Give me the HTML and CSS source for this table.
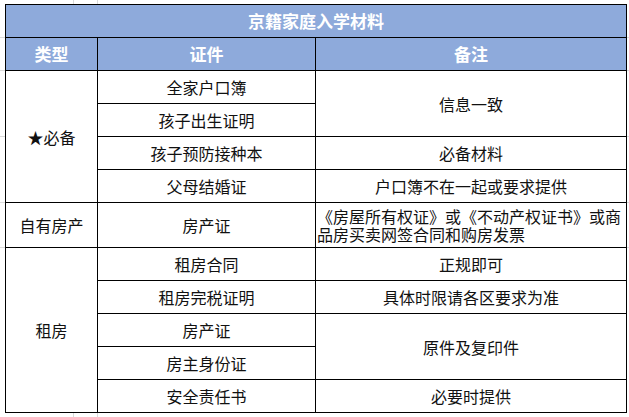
FILE: index.html
```html
<!DOCTYPE html>
<html lang="zh-CN">
<head>
<meta charset="utf-8">
<title>京籍家庭入学材料</title>
<link rel="stylesheet" href="styles.css">
</head>
<body>
<table class="sheet">
  <colgroup>
    <col class="c1">
    <col class="c2">
    <col class="c3">
  </colgroup>
  <tr class="row"><th class="title" colspan="3">京籍家庭入学材料</th></tr>
  <tr class="row"><th class="head">类型</th><th class="head">证件</th><th class="head">备注</th></tr>
  <tr class="row"><td rowspan="4">★必备</td><td>全家户口簿</td><td rowspan="2">信息一致</td></tr>
  <tr class="row"><td>孩子出生证明</td></tr>
  <tr class="row"><td>孩子预防接种本</td><td>必备材料</td></tr>
  <tr class="row"><td>父母结婚证</td><td>户口簿不在一起或要求提供</td></tr>
  <tr class="row tall"><td>自有房产</td><td>房产证</td><td class="wrap">《房屋所有权证》或《不动产权证书》或商品房买卖网签合同和购房发票</td></tr>
  <tr class="row"><td rowspan="5">租房</td><td>租房合同</td><td>正规即可</td></tr>
  <tr class="row"><td>租房完税证明</td><td>具体时限请各区要求为准</td></tr>
  <tr class="row"><td>房产证</td><td rowspan="2">原件及复印件</td></tr>
  <tr class="row"><td>房主身份证</td></tr>
  <tr class="row"><td>安全责任书</td><td>必要时提供</td></tr>
</table>
</body>
</html>
```
FILE: styles.css
```css
html, body {
  margin: 0;
  padding: 0;
}
body {
  width: 629px;
  height: 417px;
  overflow: hidden;
  background-color: #ffffff;
  background-image:
    linear-gradient(#dadada, #dadada),
    linear-gradient(#dadada, #dadada),
    linear-gradient(#dadada, #dadada),
    linear-gradient(#dadada, #dadada),
    linear-gradient(#dadada, #dadada),
    linear-gradient(#dadada, #dadada),
    linear-gradient(#dadada, #dadada);
  background-repeat: no-repeat;
  background-size: 1px 100%, 1px 100%, 100% 1px, 100% 1px, 100% 1px, 100% 1px, 100% 1px;
  background-position: 73px 0, 97px 0, 0 37px, 0 70px, 0 136px, 0 202px, 0 247px;
  font-family: "Noto Sans CJK SC", "Noto Sans", sans-serif;
  padding: 4px 0 0 5px;
  box-sizing: border-box;
}
.sheet {
  border-collapse: collapse;
  table-layout: fixed;
  width: 621px;
  background: #ffffff;
}
.c1 { width: 92px; }
.c2 { width: 218px; }
.c3 { width: 311px; }
.row { height: 33px; }
.row.tall { height: 45px; }
.sheet th,
.sheet td {
  border: 1px solid #000000;
  padding: 0;
  text-align: center;
  vertical-align: middle;
  font-size: 16px;
  line-height: 18px;
  color: #111111;
  font-weight: normal;
  white-space: nowrap;
}
.sheet th.title,
.sheet th.head {
  background: #8eaadb;
  color: #ffffff;
  font-weight: bold;
  font-size: 17px;
}
.sheet td.wrap {
  white-space: normal;
  text-align: left;
  padding: 0 2px 0 1px;
}
```
